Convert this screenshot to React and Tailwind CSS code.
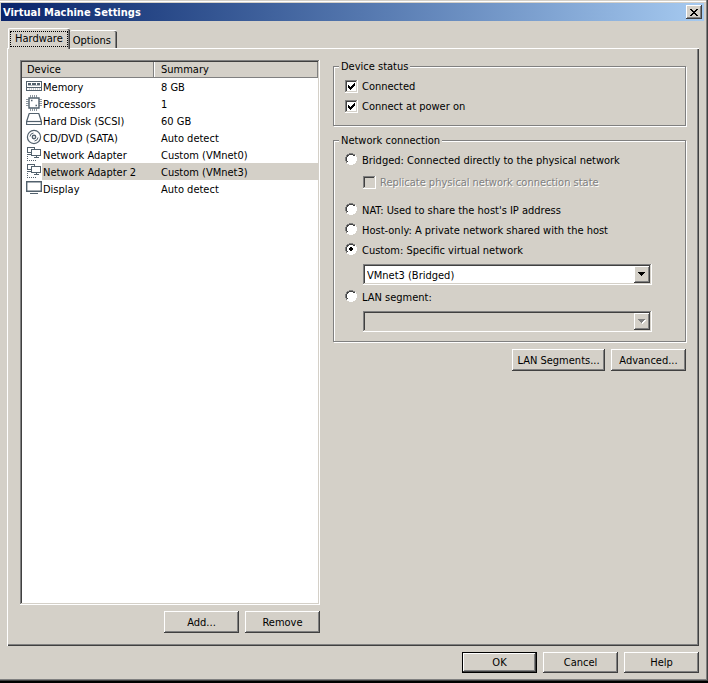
const ICON = "#52616d";

function MemoryIcon() {
  return (
    <svg width="16" height="16" viewBox="0 0 16 16" shapeRendering="crispEdges" fill="none" stroke={ICON}>
      <path d="M0.5 3.5h15v9h-15z" />
      <path d="M0 9.5h16" />
      <path d="M2 6h3M6 6h4M11 6h3" strokeWidth="2" />
      <path d="M2 7.5h12" strokeOpacity="0.4" />
      <path d="M3.5 10v2M5.5 10v2M7.5 10v2M9.5 10v2M11.5 10v2M13.5 10v2" strokeOpacity="0.3" />
    </svg>
  );
}

function CpuIcon() {
  return (
    <svg width="16" height="16" viewBox="0 0 16 16" fill="none" stroke={ICON}>
      <g strokeOpacity="0.65">
        <path d="M4.5 0v2.5M6.5 0v2.5M8.5 0v2.5M10.5 0v2.5M4.5 13.5v2.5M6.5 13.5v2.5M8.5 13.5v2.5M10.5 13.5v2.5" />
        <path d="M0 4.5h2.5M0 6.5h2.5M0 8.5h2.5M0 10.5h2.5M13 4.5h3M13 6.5h3M13 8.5h3M13 10.5h3" />
      </g>
      <path d="M3 3h10v10h-10z" strokeWidth="1.4" />
      <path d="M5 5.5h1.5M9.5 10.5h1.5" strokeWidth="1.4" />
    </svg>
  );
}

function DiskIcon() {
  return (
    <svg width="16" height="16" viewBox="0 0 16 16" fill="none" stroke={ICON} strokeWidth="1.2" strokeLinejoin="round">
      <path d="M0.6 9.5L3.2 1.5h9.6l2.6 8v3h-14.8z" />
      <path d="M0.6 9.5h14.8" />
    </svg>
  );
}

function DiscIcon() {
  return (
    <svg width="16" height="16" viewBox="0 0 16 16" fill="none" stroke={ICON}>
      <circle cx="8" cy="8" r="6.6" strokeWidth="1.2" />
      <circle cx="8" cy="8" r="1.7" strokeWidth="1.4" />
      <path d="M4 7.5A4 4 0 0 1 7.5 4M12 8.5A4 4 0 0 1 8.5 12" />
    </svg>
  );
}

function NetworkIcon() {
  return (
    <svg width="16" height="16" viewBox="0 0 16 16" shapeRendering="crispEdges" fill="none" stroke={ICON}>
      <path d="M5 6.5H1.5v-5h7V3M1 8.5h4" />
      <path d="M5.5 3.5h9v6h-9zM10.5 10v2M8 11.5h5" />
      <path d="M1.5 10v4M1 14.5h10" strokeDasharray="1 1" />
    </svg>
  );
}

function DisplayIcon() {
  return (
    <svg width="16" height="16" viewBox="0 0 16 16" fill="none" stroke={ICON}>
      <path d="M0.7 1.7h14.6v9.6h-14.6z" strokeWidth="1.4" />
      <path d="M4 13.5h8" />
    </svg>
  );
}

const devices = [
  { name: "Memory", summary: "8 GB", Icon: MemoryIcon },
  { name: "Processors", summary: "1", Icon: CpuIcon },
  { name: "Hard Disk (SCSI)", summary: "60 GB", Icon: DiskIcon },
  { name: "CD/DVD (SATA)", summary: "Auto detect", Icon: DiscIcon },
  { name: "Network Adapter", summary: "Custom (VMnet0)", Icon: NetworkIcon },
  { name: "Network Adapter 2", summary: "Custom (VMnet3)", Icon: NetworkIcon, selected: true },
  { name: "Display", summary: "Auto detect", Icon: DisplayIcon },
];

const RAISED =
  "bg-[#d4d0c8] shadow-[inset_-1px_-1px_#404040,inset_1px_1px_#fff,inset_-2px_-2px_#808080]";
const SUNKEN =
  "shadow-[inset_-1px_-1px_#fff,inset_1px_1px_#808080,inset_-2px_-2px_#d4d0c8,inset_2px_2px_#404040]";

function Button({ children, className = "h-[22px] min-w-[75px] pt-0.5" }) {
  return (
    <button type="button" className={`px-1 text-center ${RAISED} ${className}`}>
      {children}
    </button>
  );
}

function Checkbox({ label, checked, disabled }) {
  return (
    <label className="flex h-5 items-center gap-1">
      <span className="relative flex">
        <input
          type="checkbox"
          defaultChecked={checked}
          disabled={disabled}
          className={`peer size-[13px] appearance-none bg-white disabled:bg-[#d4d0c8] ${SUNKEN}`}
        />
        <svg
          width="13"
          height="13"
          viewBox="0 0 13 13"
          shapeRendering="crispEdges"
          className="pointer-events-none absolute inset-0 hidden peer-checked:block"
        >
          <path d="M3 5h1v1h1v1h1v-1h1v-1h1v-1h1v-1h1v3h-1v1h-1v1h-1v1h-1v1h-1v-1h-1v-1h-1z" />
        </svg>
      </span>
      <span className={`pt-0.5 ${disabled ? "text-[#808080] [text-shadow:1px_1px_#fff]" : ""}`}>{label}</span>
    </label>
  );
}

function Radio({ label, checked }) {
  return (
    <label className="flex h-5 items-center gap-1">
      <span className="relative mb-0.5 flex">
        <input
          type="radio"
          name="connection"
          defaultChecked={checked}
          className="peer size-[13px] appearance-none rounded-full bg-white"
        />
        <svg
          width="13"
          height="13"
          viewBox="0 0 13 13"
          shapeRendering="crispEdges"
          className="pointer-events-none absolute inset-0"
        >
          <path d="M0 0h13v13h-13zM4 0v1h-2v1h-1v2h-1v4h1v2h1v1h2v1h4v-1h2v-1h1v-2h1v-4h-1v-2h-1v-1h-2v-1z" fill="#d4d0c8" fillRule="evenodd" />
          <path d="M4 0h4v1h-4zM2 1h2v1h-2zM8 1h2v1h-2zM1 2h1v2h-1zM0 4h1v4h-1zM1 8h1v2h-1z" fill="#808080" />
          <path d="M4 1h4v1h-4zM2 2h2v1h-2zM8 2h2v1h-2zM2 3h1v1h-1zM1 4h1v4h-1zM2 8h1v1h-1z" fill="#404040" />
          <path d="M10 2h1v2h-1zM11 4h1v4h-1zM10 8h1v2h-1zM8 10h2v1h-2zM4 11h4v1h-4zM2 10h2v1h-2z" fill="#fff" />
        </svg>
        <svg
          width="13"
          height="13"
          viewBox="0 0 13 13"
          shapeRendering="crispEdges"
          className="pointer-events-none absolute inset-0 hidden peer-checked:block"
        >
          <path d="M5 4h2v1h1v2h-1v1h-2v-1h-1v-2h1z" />
        </svg>
      </span>
      <span className="pt-0.5">{label}</span>
    </label>
  );
}

function Select({ label, options, disabled }) {
  return (
    <div className="relative mr-[33px] ml-[30px]">
      <select
        aria-label={label}
        disabled={disabled}
        className={`block h-[21px] w-full appearance-none bg-white pt-0.5 pr-5 pl-1 disabled:bg-[#d4d0c8] ${SUNKEN}`}
      >
        {options.map((option) => (
          <option key={option}>{option}</option>
        ))}
      </select>
      <span
        className={`pointer-events-none absolute top-0.5 right-0.5 flex h-[17px] w-4 items-center justify-center ${RAISED}`}
      >
        <svg width="8" height="5" viewBox="0 0 8 5" shapeRendering="crispEdges">
          {disabled && <path d="M1 1h7v1h-1v1h-1v1h-1v1h-1v-1h-1v-1h-1v-1h-1z" fill="#fff" />}
          <path d="M0 0h7v1h-1v1h-1v1h-1v1h-1v-1h-1v-1h-1v-1h-1z" fill={disabled ? "#808080" : "#000"} />
        </svg>
      </span>
    </div>
  );
}

function Group({ title, children }) {
  return (
    <fieldset className="border border-[#808080] pt-px pb-[9px] pl-[11px] shadow-[1px_1px_#fff,inset_1px_1px_#fff]">
      <legend className="-ml-1.5 bg-[#d4d0c8] px-0.5 leading-[13px]">{title}</legend>
      {children}
    </fieldset>
  );
}

function TitleBar() {
  return (
    <header className="mr-0.5 flex h-[18px] items-center justify-between bg-linear-to-r from-[#0a246a] to-[#a6caf0] pr-0.5 pl-0.5">
      <h1 className="pt-0.5 font-bold text-white">Virtual Machine Settings</h1>
      <button type="button" aria-label="Close" className={`flex h-3.5 w-4 items-center justify-center ${RAISED}`}>
        <svg width="8" height="7" viewBox="0 0 8 7" shapeRendering="crispEdges">
          <path d="M0 0h2v1h1v1h2v-1h1v-1h2v1h-1v1h-1v1h-1v1h1v1h1v1h1v1h-2v-1h-1v-1h-2v1h-1v1h-2v-1h1v-1h1v-1h1v-1h-1v-1h-1v-1h-1z" />
        </svg>
      </button>
    </header>
  );
}

function DeviceList() {
  return (
    <div className={`flex-1 bg-white p-0.5 ${SUNKEN}`}>
      <table className="w-full table-fixed border-separate border-spacing-0 text-left">
        <thead>
          <tr className="h-4 bg-[#d4d0c8]">
            <th className="w-[132px] border-r border-b border-[#808080] p-0 pt-px pl-[5px] font-normal">Device</th>
            <th className="border-r border-b border-[#808080] p-0 pt-px pl-[7px] font-normal shadow-[inset_1px_0_#fff]">
              Summary
            </th>
          </tr>
        </thead>
        <tbody>
          {devices.map(({ name, summary, Icon, selected }) => (
            <tr key={name} className="h-[17px]">
              <td className="p-0 pl-1">
                <div className="flex h-[17px] items-start">
                  <Icon />
                  <span className={`h-[17px] flex-1 pt-[3px] pl-px ${selected ? "bg-[#d4d0c8]" : ""}`}>{name}</span>
                </div>
              </td>
              <td className={`p-0 pt-0.5 pl-[7px] ${selected ? "bg-[#d4d0c8]" : ""}`}>{summary}</td>
            </tr>
          ))}
        </tbody>
      </table>
    </div>
  );
}

function Tabs() {
  return (
    <div role="tablist" className="flex items-end pl-px">
      <button
        type="button"
        role="tab"
        aria-selected="true"
        className="relative -mb-px h-[21px] rounded-t-xs border-t border-l border-white bg-[#d4d0c8] py-0.5 pr-0.5 pl-px shadow-[inset_-1px_0_#404040,inset_-2px_0_#808080]"
      >
        <span className="block border border-dotted border-black px-1 leading-[14px]">Hardware</span>
      </button>
      <button
        type="button"
        role="tab"
        aria-selected="false"
        className="h-[18px] rounded-t-xs border-t border-white pt-0.5 pr-1.5 pl-[3px] shadow-[inset_-1px_0_#404040,inset_-2px_0_#808080]"
      >
        Options
      </button>
    </div>
  );
}

function App() {
  return (
    <div className="flex min-h-screen flex-col bg-black pb-0.5 font-['DejaVu_Sans_Condensed','DejaVu_Sans',sans-serif] text-[11px] leading-[14px] text-black">
      <div className="flex flex-1 flex-col bg-[#d4d0c8] pt-[3px] pr-0.5 pb-2 pl-px shadow-[inset_-1px_-1px_#404040,inset_-2px_-2px_#808080,inset_0_1px_#d4d0c8,inset_0_2px_#fff]">
        <TitleBar />
        <main className="flex flex-1 flex-col pt-[7px] pr-[7px] pl-1.5">
          <Tabs />
          <section className="flex flex-1 gap-[13px] border-t border-l border-white pt-[11px] pr-[13px] pb-[13px] pl-3 shadow-[inset_-1px_-1px_#404040,inset_-2px_-2px_#808080]">
            <div className="flex w-[300px] shrink-0 flex-col">
              <DeviceList />
              <div className="mt-1.5 flex justify-end gap-1.5">
                <Button>Add...</Button>
                <Button>Remove</Button>
              </div>
            </div>
            <div className="flex flex-1 flex-col">
              <Group title="Device status">
                <div className="pt-0.5">
                  <Checkbox label="Connected" checked />
                  <Checkbox label="Connect at power on" checked />
                </div>
              </Group>
              <div className="mt-2">
                <Group title="Network connection">
                  <div className="pt-0.5">
                    <Radio label="Bridged: Connected directly to the physical network" />
                    <div className="mt-0.5 mb-2 pl-[18px]">
                      <Checkbox label="Replicate physical network connection state" disabled />
                    </div>
                    <Radio label="NAT: Used to share the host's IP address" />
                    <Radio label="Host-only: A private network shared with the host" />
                    <Radio label="Custom: Specific virtual network" checked />
                  </div>
                  <div className="mt-1 -ml-3">
                    <Select label="Virtual network" options={["VMnet3 (Bridged)"]} />
                  </div>
                  <div className="mt-0.5">
                    <Radio label="LAN segment:" />
                  </div>
                  <div className="mt-1 -ml-3">
                    <Select label="LAN segment" options={[""]} disabled />
                  </div>
                </Group>
              </div>
              <div className="mt-[7px] flex justify-end gap-1.5">
                <Button className="h-[22px] min-w-[93px] pt-0.5">LAN Segments...</Button>
                <Button>Advanced...</Button>
              </div>
            </div>
          </section>
          <footer className="mt-1.5 flex justify-end gap-1.5">
            <button
              type="button"
              className="h-[21px] min-w-[75px] border border-black bg-[#d4d0c8] shadow-[inset_-1px_-1px_#404040,inset_1px_1px_#fff,inset_-2px_-2px_#808080]"
            >
              OK
            </button>
            <Button className="h-[21px] min-w-[75px]">Cancel</Button>
            <Button className="h-[21px] min-w-[75px]">Help</Button>
          </footer>
        </main>
      </div>
    </div>
  );
}

export default App;
